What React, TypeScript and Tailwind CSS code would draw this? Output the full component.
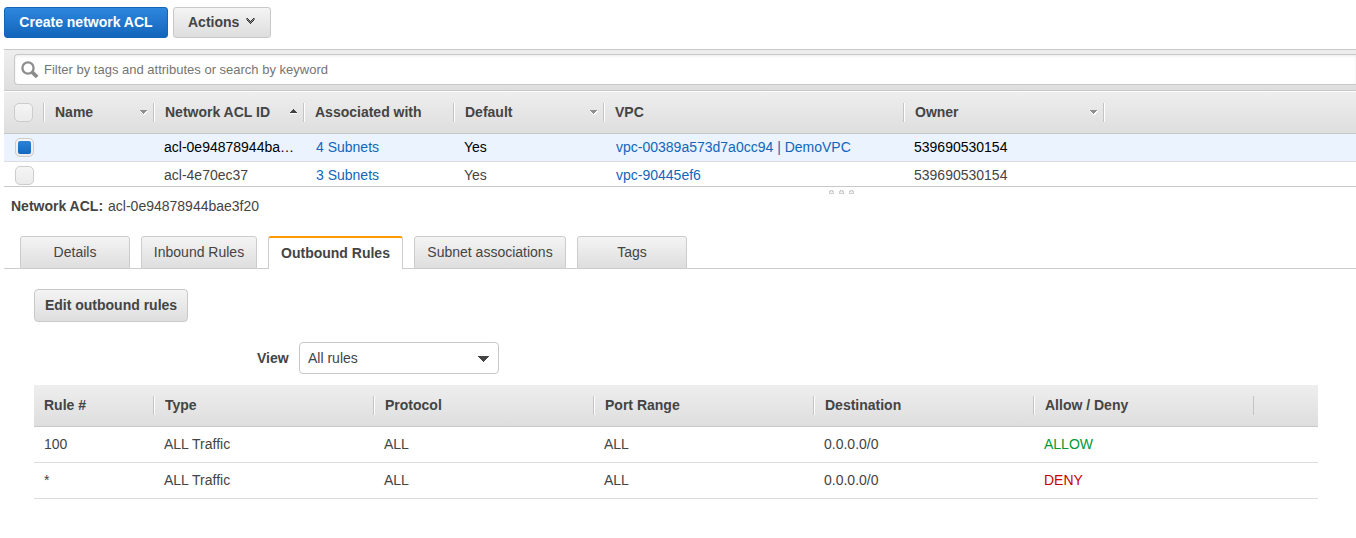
import React from "react";

type Sort = "up" | "down" | null;

const aclColumns: { label: string; width: string; sort: Sort }[] = [
  { label: "Name", width: "w-[110px]", sort: "down" },
  { label: "Network ACL ID", width: "w-[150px]", sort: "up" },
  { label: "Associated with", width: "w-[150px]", sort: null },
  { label: "Default", width: "w-[150px]", sort: "down" },
  { label: "VPC", width: "w-[300px]", sort: null },
  { label: "Owner", width: "w-[200px]", sort: "down" },
];

const acls = [
  { id: "acl-0e94878944ba…", subnets: "4 Subnets", def: "Yes", vpc: "vpc-00389a573d7a0cc94 | DemoVPC", owner: "539690530154", selected: true },
  { id: "acl-4e70ec37", subnets: "3 Subnets", def: "Yes", vpc: "vpc-90445ef6", owner: "539690530154", selected: false },
];

const tabs = [
  { label: "Details", width: "w-[110px]" },
  { label: "Inbound Rules", width: "w-[116px]" },
  { label: "Outbound Rules", width: "w-[135px]" },
  { label: "Subnet associations", width: "w-[152px]" },
  { label: "Tags", width: "w-[110px]" },
];

const ruleColumns = ["Type", "Protocol", "Port Range", "Destination", "Allow / Deny"];

const rules = [
  { num: "100", action: "ALLOW" },
  { num: "*", action: "DENY" },
];

function SortArrow({ dir }: { dir: Sort }) {
  if (!dir) return null;
  return dir === "down" ? (
    <svg width="8" height="6" viewBox="0 0 8 6" shapeRendering="crispEdges" className="mt-[2px] shrink-0">
      <path d="M0 1h8L4 6z" fill="#fff" />
      <path d="M0 0h7v1H6v1H5v1H4v1H3V3H2V2H1V1H0z" fill="#8f8f8f" />
    </svg>
  ) : (
    <svg width="8" height="6" viewBox="0 0 8 6" shapeRendering="crispEdges" className="shrink-0">
      <path d="M0 4h7v1H0z" fill="#fff" />
      <path d="M3 0h1v1h1v1h1v1h1v1H0V3h1V2h1V1h1z" fill="#444" />
    </svg>
  );
}

function Checkbox({ checked = false }: { checked?: boolean }) {
  return (
    <span className="flex h-[19px] w-[19px] shrink-0 items-center justify-center rounded-[5px] border border-[#ccc] bg-linear-to-b from-[#f5f5f5] to-[#ebebeb]">
      {checked && <span className="h-[13px] w-[13px] rounded-[2px] bg-linear-to-b from-[#2b84d8] to-[#1467c0]" />}
    </span>
  );
}

export default function App() {
  return (
    <div className="h-[538px] w-[1356px] overflow-hidden bg-white pl-1 font-['Liberation_Sans',Arial,sans-serif] text-sm leading-4 text-[#444]">
      <div className="flex h-[49px] gap-[5px] pt-[7px]">
        <button className="flex h-[31px] w-[164px] items-center justify-center rounded-[3px] border border-[#1166bb] bg-linear-to-b from-[#2e86dd] to-[#1166bb] pb-px font-bold text-white">
          Create network ACL
        </button>
        <button className="flex h-[31px] w-[98px] items-center rounded-[3px] border border-[#c8c8c8] bg-linear-to-b from-[#f4f4f4] to-[#dedede] pb-px pl-[14px] font-bold">
          Actions
          <svg width="9" height="6" viewBox="0 0 9 6" shapeRendering="crispEdges" className="mb-[2px] ml-[7px]">
            <path d="M0 0h2v1h1v1h1v1h1V2h1V1h1V0h2v2H8v1H7v1H6v1H5v1H4V5H3V4H2V3H1V2H0z" fill="#8a8a8a" />
            <path d="M1 0h1v1H1zM2 1h1v1H2zM3 2h1v1H3zM4 3h1v1H4zM5 2h1v1H5zM6 1h1v1H6zM7 0h1v1H7zM1 2h1v1H1zM2 3h1v1H2zM3 4h1v1H3zM4 5h1v1H4zM5 4h1v1H5zM6 3h1v1H6zM7 2h1v1H7z" fill="#333" />
          </svg>
        </button>
      </div>

      <div className="h-[42px] border-y border-[#c8c8c8] bg-linear-to-b from-[#eee] to-[#dedede] pt-1 pl-[10px]">
        <div className="flex h-[31px] items-center rounded-l-[4px] border border-r-0 border-[#c8c8c8] bg-white pl-[6px] text-[13px] text-[#757575] shadow-[inset_0_1px_3px_rgba(0,0,0,0.08)]">
          <svg width="18" height="18" viewBox="0 0 18 18" className="mr-[5px]" fill="none" stroke="#8c8c8c">
            <circle cx="7" cy="7" r="5.6" strokeWidth="2.3" />
            <path d="M10.8 10.8L16.2 16" strokeWidth="3.8" />
          </svg>
          Filter by tags and attributes or search by keyword
        </div>
      </div>

      <div className="flex h-[43px] items-center border-t border-b border-t-white border-b-[#c8c8c8] bg-linear-to-b from-[#eee] to-[#dedede] font-bold">
        <div className="flex w-[39px] pl-[10px]"><Checkbox /></div>
        {aclColumns.map((c) => (
          <div key={c.label} className={`${c.width} flex h-[19px] items-center border-l border-[#c4c4c4]`}>
            <div className="flex h-full w-full items-center justify-between border-l border-white pr-[5px] pb-px pl-[10px]">
              {c.label}
              <SortArrow dir={c.sort} />
            </div>
          </div>
        ))}
        <div className="h-[19px] w-[2px] border-r border-l border-r-white border-l-[#c4c4c4]" />
      </div>

      <div className="h-[53px] overflow-hidden border-b border-[#c8c8c8]">
        {acls.map((a) => (
          <div key={a.id} className={`flex h-[28px] items-center border-b border-[#ddd] ${a.selected ? "bg-[#eaf3fe] text-black" : ""}`}>
            <div className="flex w-[150px] pl-[11px]"><Checkbox checked={a.selected} /></div>
            <div className="w-[150px] pb-[2px] pl-[10px] whitespace-nowrap">{a.id}</div>
            <div className="w-[150px] pb-[2px] pl-3 text-[#1166bb]">{a.subnets}</div>
            <div className="w-[150px] pb-[2px] pl-[10px]">{a.def}</div>
            <div className="w-[300px] pb-[2px] pl-3 text-[#1166bb]">{a.vpc}</div>
            <div className="pb-[2px] pl-[10px]">{a.owner}</div>
          </div>
        ))}
      </div>

      <div className="flex h-[11px] gap-[5px] pt-[3px] pl-[825px]">
        {[0, 1, 2].map((i) => (
          <svg key={i} width="5" height="4" viewBox="0 0 5 4" shapeRendering="crispEdges">
            <path d="M1 0h3v1h1v3H0V1h1z" fill="#cfcfcf" />
            <path d="M1 2h3v1H1zM2 1h1v1H2z" fill="#f4f4f4" />
          </svg>
        ))}
      </div>
      <div className="flex h-[38px] gap-[5px] pl-[7px]">
        <span className="font-bold">Network ACL:</span>
        <span>acl-0e94878944bae3f20</span>
      </div>

      <div className="flex h-[33px]">
        <div className="w-4 border-b border-[#ccc]" />
        {tabs.map((t, i) => (
          <React.Fragment key={t.label}>
            {i > 0 && <div className="w-[11px] border-b border-[#ccc]" />}
            {i === 2 ? (
              <div className={`${t.width} rounded-t-[3px] border-x border-t-2 border-[#ccc] border-t-[#ff9900] bg-white pt-[7px] text-center font-bold`}>{t.label}</div>
            ) : (
              <div className={`${t.width} rounded-t-[3px] border border-[#ccc] bg-linear-to-b from-[#f4f4f4] to-[#dedede] pt-[7px] text-center`}>{t.label}</div>
            )}
          </React.Fragment>
        ))}
        <div className="flex-1 border-b border-[#ccc]" />
      </div>

      <div className="pt-5 pr-[38px] pl-[30px]">
        <button className="flex h-[33px] w-[154px] items-center justify-center rounded-[4px] border border-[#c8c8c8] bg-linear-to-b from-[#f4f4f4] to-[#dedede] pb-px font-bold">
          Edit outbound rules
        </button>
        <div className="mt-5 flex h-8 items-center pl-[223px]">
          <span className="w-[42px] font-bold">View</span>
          <div className="flex h-8 w-[200px] items-center justify-between rounded-[4px] border border-[#c8c8c8] bg-white pr-[9px] pl-2">
            All rules
            <svg width="11" height="6" viewBox="0 0 11 6" shapeRendering="crispEdges" className="mt-px">
              <path d="M0 0h11v1h-1v1H9v1H8v1H7v1H6v1H5V5H4V4H3V3H2V2H1V1H0z" fill="#444" />
            </svg>
          </div>
        </div>

        <div className="mt-[11px] flex h-[42px] items-center border-b border-[#c8c8c8] bg-linear-to-b from-[#eee] to-[#dedede] font-bold">
          <div className="w-[119px] pb-px pl-[10px]">Rule #</div>
          {ruleColumns.map((c) => (
            <div key={c} className="h-[19px] w-[220px] border-l border-[#c4c4c4]">
              <div className="h-full border-l border-white pt-px pl-[10px]">{c}</div>
            </div>
          ))}
          <div className="h-[19px] w-px bg-[#c4c4c4]" />
        </div>
        {rules.map((r) => (
          <div key={r.num} className="flex h-9 items-center border-b border-[#ddd] pb-[2px]">
            <div className="w-[120px] pl-[10px]">{r.num}</div>
            <div className="w-[220px] pl-[10px]">ALL Traffic</div>
            <div className="w-[220px] pl-[10px]">ALL</div>
            <div className="w-[220px] pl-[10px]">ALL</div>
            <div className="w-[220px] pl-[10px]">0.0.0.0/0</div>
            <div className={`pl-[10px] ${r.action === "ALLOW" ? "text-[#009933]" : "text-[#cc0000]"}`}>{r.action}</div>
          </div>
        ))}
      </div>
    </div>
  );
}
